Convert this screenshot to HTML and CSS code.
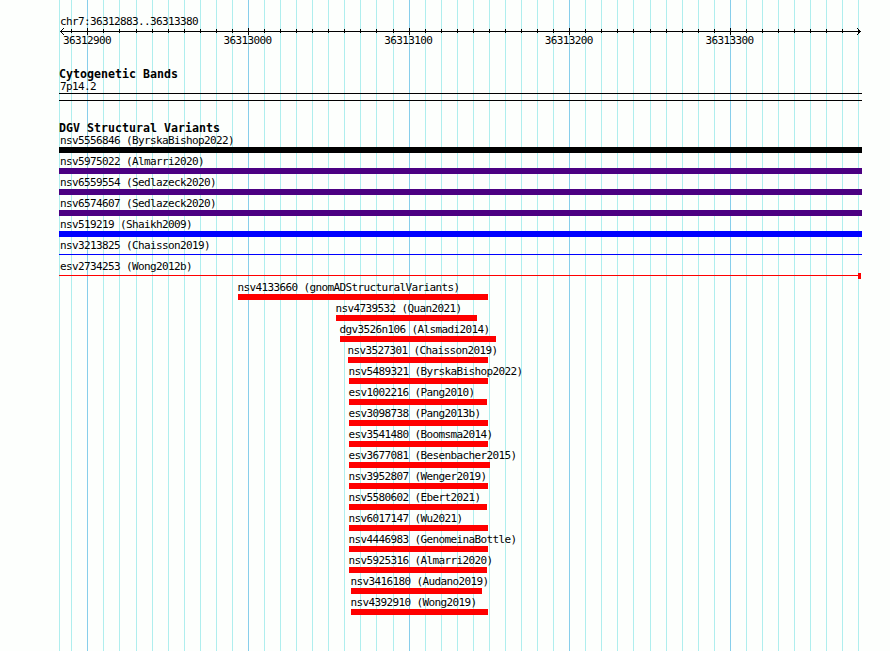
FILE: index.html
```
<!DOCTYPE html>
<html lang="en">
<head>
<meta charset="utf-8">
<title>chr7:36312883..36313380</title>
<link rel="stylesheet" href="styles.css">
</head>
<body>
<svg class="grid" width="890" height="651" aria-hidden="true"><path id="minor" class="minor"/><path id="major" class="major"/></svg>
<main class="browser">
<header class="ruler">
<div class="region">chr7:36312883..36313380</div>
<svg class="axis" width="803" height="7" aria-hidden="true"><path id="ticks" class="ink"/><path class="ink" d="M1 3h801v1h-801zM2 2h1v1h-1zM3 1h1v1h-1zM4 0h1v1h-1zM2 4h1v1h-1zM3 5h1v1h-1zM4 6h1v1h-1zM800 2h1v1h-1zM799 1h1v1h-1zM798 0h1v1h-1zM800 4h1v1h-1zM799 5h1v1h-1zM798 6h1v1h-1z"/></svg>
<div class="positions"><span>36312900</span><span>36313000</span><span>36313100</span><span>36313200</span><span>36313300</span></div>
</header>
<section class="cyto">
<h2>Cytogenetic Bands</h2>
<div class="name">7p14.2</div>
<div class="band"></div>
</section>
<section class="variants">
<h2>DGV Structural Variants</h2>
<div id="rows"></div>
</section>
</main>
<script src="script.js"></script>
</body>
</html>
```
FILE: styles.css
```
* { box-sizing: border-box; }
body {
  margin: 0;
  height: 651px;
  overflow: hidden;
  background: #fdfffd;
  color: #000;
  font: 11px/12px "DejaVu Sans Mono", monospace;
  letter-spacing: -0.622px;
  white-space: nowrap;
}
svg { display: block; shape-rendering: crispEdges; }
.grid { position: absolute; inset: 0; z-index: -1; }
.minor { fill: #afeeee; }
.major { fill: #87ceeb; }
.ink { fill: #000; }
.browser { width: 803px; margin-left: 59px; padding-top: 16px; }
.ruler { height: 52px; }
.region { height: 12px; padding-left: 1px; }
.positions { display: flex; gap: 112.6px; padding-left: 4px; height: 12px; }
.positions span { width: 48px; }
h2 {
  margin: 0;
  height: 13px;
  font-size: 11.6px;
  line-height: 13px;
  letter-spacing: 0.016px;
}
.cyto { height: 54px; }
.name { height: 12px; padding-left: 1px; }
.band { height: 8px; border: solid #000; border-width: 1px 0; }
.row { height: 21px; margin-left: var(--start); }
.label { height: 12px; margin-left: -0.5px; }
.full .label { margin-left: 1px; }
.bar { width: var(--length); height: 6px; background: var(--color); }
.thin .bar { height: 1px; margin-top: 2px; }
.end .bar {
  height: 6px;
  margin-top: 0;
  background:
    linear-gradient(red, red) right / 3px 6px no-repeat,
    linear-gradient(red, red) 0 2px / 100% 1px no-repeat;
}
```
FILE: script.js
```
const variants = [
  ["nsv5556846 (ByrskaBishop2022)", 59, 862, "black", "full"],
  ["nsv5975022 (Almarri2020)", 59, 862, "indigo", "full"],
  ["nsv6559554 (Sedlazeck2020)", 59, 862, "indigo", "full"],
  ["nsv6574607 (Sedlazeck2020)", 59, 862, "indigo", "full"],
  ["nsv519219 (Shaikh2009)", 59, 862, "blue", "full"],
  ["nsv3213825 (Chaisson2019)", 59, 862, "blue", "full thin"],
  ["esv2734253 (Wong2012b)", 59, 861, "red", "full end"],
  ["nsv4133660 (gnomADStructuralVariants)", 238, 488],
  ["nsv4739532 (Quan2021)", 336, 477],
  ["dgv3526n106 (Alsmadi2014)", 340, 496],
  ["nsv3527301 (Chaisson2019)", 348, 488],
  ["nsv5489321 (ByrskaBishop2022)", 349, 488],
  ["esv1002216 (Pang2010)", 349, 487],
  ["esv3098738 (Pang2013b)", 349, 488],
  ["esv3541480 (Boomsma2014)", 349, 488],
  ["esv3677081 (Besenbacher2015)", 349, 490],
  ["nsv3952807 (Wenger2019)", 349, 488],
  ["nsv5580602 (Ebert2021)", 349, 487],
  ["nsv6017147 (Wu2021)", 349, 488],
  ["nsv4446983 (GenomeinaBottle)", 349, 488],
  ["nsv5925316 (Almarri2020)", 349, 487],
  ["nsv3416180 (Audano2019)", 351, 482],
  ["nsv4392910 (Wong2019)", 351, 488]
];
document.getElementById("rows").innerHTML = variants.map(([name, start, end, color = "red", kind = ""]) =>
  `<div class="row ${kind}" style="--start:${start - 59}px;--length:${end - start}px;--color:${color}"><div class="label">${name}</div><div class="bar"></div></div>`
).join("");

// One grid line every 10 bases, a major one every 100.
let minor = "M59 0h1v651h-1z", major = "", ticks = "";
for (let n = 0; n < 50; n++) {
  const x = Math.floor(71.755 + n * 16.0635);
  const isMajor = n % 10 === 1;
  const line = `M${x} 0h1v651h-1z`;
  if (isMajor) major += line; else minor += line;
  ticks += isMajor ? `M${x - 59} 0h1v7h-1z` : `M${x - 59} 1h1v4h-1z`;
}
document.getElementById("minor").setAttribute("d", minor);
document.getElementById("major").setAttribute("d", major);
document.getElementById("ticks").setAttribute("d", ticks);
```
